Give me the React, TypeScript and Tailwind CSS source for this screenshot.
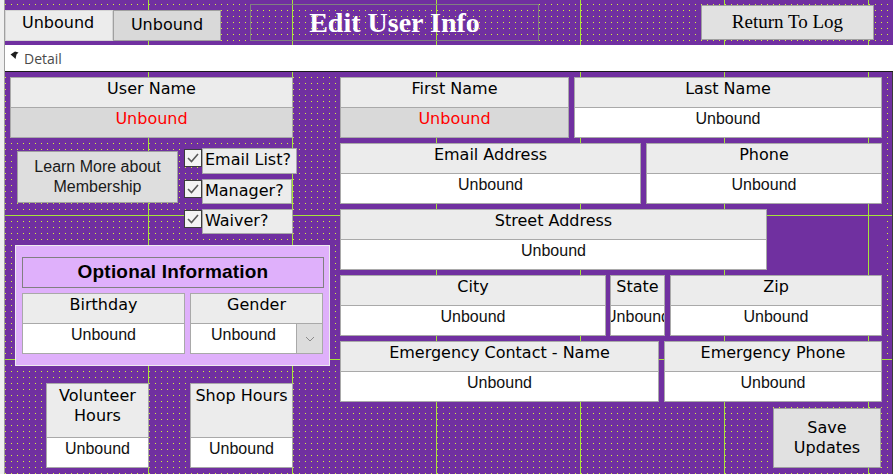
import React from "react";

// Access-style design view: purple sections with dot grid and lime ruler lines
const HEADER_BG =
  "bg-[#7030a0] bg-[image:linear-gradient(90deg,transparent_143px,#a6e43a_143px),linear-gradient(90deg,transparent_1px,#7030a0_1px),linear-gradient(180deg,#7030a0_4px,#d6f23c_4px,#d6f23c_5px,#7030a0_5px)] bg-[length:144px_144px,6px_6px,6px_6px]";
const DETAIL_BG =
  "bg-[#7030a0] bg-[image:linear-gradient(90deg,transparent_143px,#a6e43a_143px),linear-gradient(180deg,transparent_143px,#a6e43a_143px),linear-gradient(90deg,transparent_1px,#7030a0_1px),linear-gradient(180deg,#7030a0_5px,#d6f23c_5px)] bg-[length:144px_144px,144px_144px,6px_6px,6px_6px]";
const BOX_BG =
  "bg-[#7030a0] bg-[image:linear-gradient(90deg,transparent_100px,#a6e43a_100px,#a6e43a_101px,transparent_101px),linear-gradient(180deg,transparent_143px,#a6e43a_143px)] bg-[length:144px_144px,144px_144px]";

const LABEL = "font-['DejaVu_Sans',sans-serif] text-[16px] leading-[19px] text-black";
const VALUE = "font-['Liberation_Sans',Arial,sans-serif] text-[16px] leading-[19px] text-[#111]";

function Field({ w, label, red = false }: { w: string; label: string; red?: boolean }) {
  return (
    <div className={`${w} h-[61px] shrink-0 flex flex-col border border-[#a9a9a9]`}>
      <div className={`h-[30px] shrink-0 bg-[#ececec] border-b border-[#a9a9a9] pt-[1px] text-center whitespace-nowrap overflow-hidden ${LABEL}`}>
        {label}
      </div>
      {red ? (
        <div className="flex-1 flex justify-center overflow-hidden whitespace-nowrap pt-[1px] bg-[#d9d9d9] text-[#ff0000] font-['DejaVu_Sans',sans-serif] text-[16px] leading-[19px]">
          Unbound
        </div>
      ) : (
        <div className={`flex-1 flex justify-center overflow-hidden whitespace-nowrap pt-[1px] bg-white ${VALUE}`}>Unbound</div>
      )}
    </div>
  );
}

function Check({ label, w, h }: { label: string; w: string; h: string }) {
  return (
    <div className="flex items-start">
      <div className="mt-[1px] w-[18px] h-[18px] shrink-0 bg-[#f4f4f4] border border-[#3c3c3c] flex items-center justify-center">
        <svg width="14" height="12" viewBox="0 0 14 12">
          <polyline points="2,6 5.5,9.5 12,2" fill="none" stroke="#5a5a5a" strokeWidth="1.6" />
        </svg>
      </div>
      <div className={`${w} ${h} bg-[#ececec] border border-[#a9a9a9] pl-[2px] pt-[1px] ${LABEL}`}>{label}</div>
    </div>
  );
}

export default function App() {
  return (
    <div className="w-[893px] h-[474px] flex overflow-hidden bg-white">
      <div className="w-[5px] shrink-0 bg-[#f0f0f0] border-r border-[#a0a0a0]" />
      <div className="flex-1 flex flex-col">
        {/* Form header */}
        <div className={`h-[45px] shrink-0 flex items-start ${HEADER_BG}`}>
          <div className="mt-[10px] flex">
            <div className={`w-[108px] h-[31px] bg-[#ececec] border border-[#d4d4d4] pl-[16px] pt-[2px] ${LABEL}`}>Unbound</div>
            <div className={`w-[108px] h-[31px] bg-[#d9d9d9] border border-[#a0a0a0] pt-[4px] text-center text-[#1a1a2a] ${LABEL}`}>
              Unbound
            </div>
          </div>
          <div className="ml-[29px] mt-[4px] w-[289px] h-[37px] border border-[#808080] flex items-center justify-center font-['Liberation_Serif',serif] font-bold text-[28px] text-white">
            Edit User Info
          </div>
          <div className="ml-[162px] mt-[5px] w-[173px] h-[35px] bg-[#e1e1e1] border border-[#a0a0a0] flex items-center justify-center font-['Liberation_Serif',serif] text-[19px] text-black">
            Return To Log
          </div>
        </div>

        {/* Section bar */}
        <div className="h-[27px] shrink-0 bg-white border-b border-[#1a1a1a] flex items-center">
          <svg className="ml-[5px] mb-[6px]" width="9" height="9" viewBox="0 0 9 9">
            <polygon points="0.5,3.5 5,0.5 8.5,1.5 6.5,3.5 5.5,8 3.5,6" fill="#1e1e1e" />
          </svg>
          <span className="ml-[5px] font-['Open_Sans',sans-serif] text-[14px] text-[#4a4a4a]">Detail</span>
        </div>

        {/* Detail */}
        <div className={`flex-1 flex border-r border-[#3c3c3c] overflow-hidden ${DETAIL_BG}`}>
          <div className="w-[331px] shrink-0 flex flex-col">
            <div className="ml-[5px] mt-[5px]">
              <Field w="w-[283px]" label="User Name" red />
            </div>

            <div className="mt-[10px] flex items-start">
              <div className="ml-[12px] mt-[3px] w-[161px] h-[52px] bg-[#dedede] border border-[#a0a0a0] flex flex-col items-center justify-center font-['Liberation_Sans',Arial,sans-serif] text-[16px] leading-[20px] text-[#1a1a1a]">
                <span>Learn More about</span>
                <span>Membership</span>
              </div>
              <div className="ml-[6px] flex flex-col gap-[5px]">
                <Check label="Email List?" w="w-[95px]" h="h-[26px]" />
                <Check label="Manager?" w="w-[90px]" h="h-[25px]" />
                <Check label="Waiver?" w="w-[91px]" h="h-[25px]" />
              </div>
            </div>

            <div className="ml-[10px] mt-[11px] w-[315px] h-[121px] bg-[#dfb0fb] border border-[#ededed] flex flex-col pl-[6px]">
              <div className="mt-[11px] w-[302px] h-[31px] border border-[#808080] flex items-center justify-center font-['Liberation_Sans',Arial,sans-serif] font-bold text-[19px] tracking-[0.2px] text-black">
                Optional Information
              </div>
              <div className="mt-[5px] flex gap-[5px]">
                <Field w="w-[163px]" label="Birthday" />
                <div className="w-[133px] h-[61px] flex flex-col border border-[#a9a9a9]">
                  <div className={`h-[30px] shrink-0 bg-[#ececec] border-b border-[#a9a9a9] pt-[1px] text-center ${LABEL}`}>Gender</div>
                  <div className="flex-1 flex bg-white">
                    <div className={`flex-1 text-center pt-[1px] ${VALUE}`}>Unbound</div>
                    <div className="w-[26px] bg-[#dcdcdc] border-l border-[#a9a9a9] flex items-center justify-center">
                      <svg width="10" height="6" viewBox="0 0 10 6">
                        <polyline points="1,1 5,5 9,1" fill="none" stroke="#8a8a8a" strokeWidth="1" />
                      </svg>
                    </div>
                  </div>
                </div>
              </div>
            </div>

            <div className="mt-[17px] flex">
              <div className="ml-[41px] w-[103px] h-[85px] flex flex-col border border-[#a9a9a9]">
                <div className={`h-[54px] shrink-0 bg-[#ececec] border-b border-[#a9a9a9] pt-[2px] text-center leading-[20px] ${LABEL}`}>
                  Volunteer
                  <br />
                  Hours
                </div>
                <div className={`flex-1 bg-white text-center pt-[1px] ${VALUE}`}>Unbound</div>
              </div>
              <div className="ml-[41px] w-[103px] h-[85px] flex flex-col border border-[#a9a9a9]">
                <div className={`h-[54px] shrink-0 bg-[#ececec] border-b border-[#a9a9a9] pt-[2px] text-center whitespace-nowrap ${LABEL}`}>
                  Shop Hours
                </div>
                <div className={`flex-1 bg-white text-center pt-[1px] ${VALUE}`}>Unbound</div>
              </div>
            </div>
          </div>

          <div className="w-[548px] shrink-0 flex flex-col">
            <div className={`h-[332px] shrink-0 pt-[5px] pl-[4px] flex flex-col gap-[5px] ${BOX_BG}`}>
              <div className="flex gap-[5px]">
                <Field w="w-[229px]" label="First Name" red />
                <Field w="w-[308px]" label="Last Name" />
              </div>
              <div className="flex gap-[5px]">
                <Field w="w-[301px]" label="Email Address" />
                <Field w="w-[236px]" label="Phone" />
              </div>
              <div className="flex">
                <Field w="w-[427px]" label="Street Address" />
              </div>
              <div className="flex">
                <Field w="w-[266px]" label="City" />
                <div className="ml-[4px]">
                  <Field w="w-[55px]" label="State" />
                </div>
                <div className="ml-[5px]">
                  <Field w="w-[212px]" label="Zip" />
                </div>
              </div>
              <div className="flex gap-[5px]">
                <Field w="w-[319px]" label="Emergency Contact - Name" />
                <Field w="w-[218px]" label="Emergency Phone" />
              </div>
            </div>
            <div className={`ml-[437px] mt-[4px] w-[108px] h-[60px] bg-[#e1e1e1] border border-[#a0a0a0] flex flex-col items-center justify-center leading-[20px] ${LABEL}`}>
              <span>Save</span>
              <span>Updates</span>
            </div>
          </div>
        </div>
      </div>
    </div>
  );
}
